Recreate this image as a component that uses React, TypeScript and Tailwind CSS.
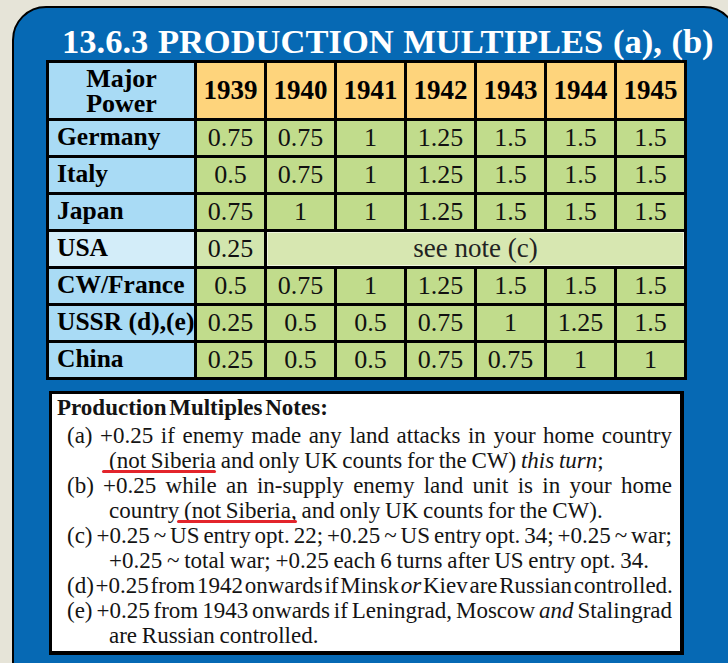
import type { ReactNode } from "react";

const years = ["1939", "1940", "1941", "1942", "1943", "1944", "1945"];

const rows: { label: string; values: string[] }[] = [
  { label: "Germany", values: ["0.75", "0.75", "1", "1.25", "1.5", "1.5", "1.5"] },
  { label: "Italy", values: ["0.5", "0.75", "1", "1.25", "1.5", "1.5", "1.5"] },
  { label: "Japan", values: ["0.75", "1", "1", "1.25", "1.5", "1.5", "1.5"] },
  { label: "USA", values: ["0.25"] },
  { label: "CW/France", values: ["0.5", "0.75", "1", "1.25", "1.5", "1.5", "1.5"] },
  { label: "USSR (d),(e)", values: ["0.25", "0.5", "0.5", "0.75", "1", "1.25", "1.5"] },
  { label: "China", values: ["0.25", "0.5", "0.5", "0.75", "0.75", "1", "1"] },
];

export default function App() {
  return (
    <div className="h-[663px] w-[728px] overflow-hidden bg-[#e6e4d8] pl-[12px] pt-[6px] font-['Liberation_Serif','Times_New_Roman',serif]">
      <div className="h-[700px] w-[726px] rounded-tl-[34px] rounded-tr-[34px] border-2 border-black bg-[#0669b4]">
        <h1 className="h-[52px] pl-[48px] pt-[16px] text-[34.5px] font-bold leading-[34px] whitespace-nowrap text-white [word-spacing:1px]">
          13.6.3 PRODUCTION MULTIPLES (a), (b)
        </h1>
        <ProductionTable />
        <Notes />
      </div>
    </div>
  );
}

function ProductionTable() {
  return (
    <div className="ml-[32px] grid w-fit grid-cols-[145px_repeat(7,67px)] grid-rows-[55px_repeat(7,34px)] gap-[3px] border-[3px] border-black bg-black">
      <div className="flex flex-col items-center justify-center bg-[#a9dbf5] text-[26px] font-bold leading-[25px] text-black">
        <span>Major</span>
        <span>Power</span>
      </div>
      {years.map((y) => (
        <div key={y} className="flex items-center justify-center bg-[#fed47c] text-[27px] font-bold text-black">
          {y}
        </div>
      ))}
      {rows.map((r) => {
        const usa = r.label === "USA";
        return [
          <div
            key={r.label}
            className={`flex items-center whitespace-nowrap pl-[8px] pb-[2px] text-[25.5px] font-bold text-black ${
              usa ? "bg-[#d3edf9]" : "bg-[#a9dbf5]"
            }`}
          >
            {r.label}
          </div>,
          ...r.values.map((v, i) => (
            <div
              key={r.label + i}
              className={`flex items-center justify-center pb-[2px] text-[26px] text-[#111] ${
                usa ? "bg-[#d2e6ae]" : "bg-[#c1dc8c]"
              }`}
            >
              {v}
            </div>
          )),
          usa ? (
            <div
              key="see-note"
              className="col-span-6 flex items-center justify-center border border-[#eef5dc] bg-[#d7e7b1] pb-[2px] text-[27px] text-[#222]"
            >
              see note (c)
            </div>
          ) : null,
        ];
      })}
    </div>
  );
}

function Mark({ children }: { children: ReactNode }) {
  return (
    <span className="relative">
      {children}
      <span className="absolute bottom-0 -left-[7px] right-0 h-[3px] rounded-full bg-[#e3242b]" />
    </span>
  );
}

function Em({ children }: { children: ReactNode }) {
  return <span className="font-['Liberation_Serif',serif] italic">{children}</span>;
}

function Notes() {
  const first = "ml-[13px] mr-[8px] text-justify [text-align-last:justify] whitespace-nowrap";
  const cont = "ml-[55px] whitespace-nowrap";
  return (
    <div className="mt-[11px] ml-[35px] w-[635px] border-t-[3px] border-l-[3px] border-r-[4px] border-b-[4px] border-black bg-white pb-[3px] pl-[2px] pt-[1px] text-[23px] leading-[25px] text-[#141414]">
      <div className="pl-[3px] font-bold [word-spacing:-3px]">Production Multiples Notes:</div>
      <div className="mt-[3px]">
        <div className={first}>(a) +0.25 if enemy made any land attacks in your home country</div>
        <div className={`${cont} [word-spacing:-1px]`}>
          <Mark>(not Siberia</Mark> and only UK counts for the CW) <Em>this turn</Em>;
        </div>
        <div className={first}>(b) +0.25 while an in-supply enemy land unit is in your home</div>
        <div className={`${cont} [word-spacing:-1px]`}>
          country <Mark>(not Siberia,</Mark> and only UK counts for the CW).
        </div>
        <div className={`${first} [word-spacing:-2px]`}>
          (c) +0.25 ~ US entry opt. 22; +0.25 ~ US entry opt. 34; +0.25 ~ war;
        </div>
        <div className={`${cont} [word-spacing:-1px]`}>
          +0.25 ~ total war; +0.25 each 6 turns after US entry opt. 34.
        </div>
        <div className={`${first} [word-spacing:-4px]`}>
          (d) +0.25 from 1942 onwards if Minsk <Em>or</Em> Kiev are Russian controlled.
        </div>
        <div className={`${first} [word-spacing:-2.5px]`}>
          (e) +0.25 from 1943 onwards if Leningrad, Moscow <Em>and</Em> Stalingrad
        </div>
        <div className={`${cont} [word-spacing:-1px]`}>are Russian controlled.</div>
      </div>
    </div>
  );
}
